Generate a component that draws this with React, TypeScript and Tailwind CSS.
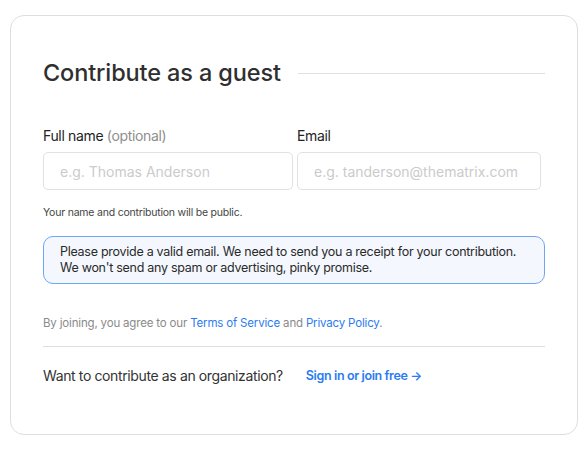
export default function App() {
  return (
    <div className="min-h-[454px] bg-white px-[10px] pt-[15px] font-['Inter',sans-serif]">
      <div className="h-[420px] w-[568px] rounded-[14px] border border-[#dedede] bg-white px-[32px] pt-[41px]">
        <div className="flex items-center gap-[17px]">
          <h2 className="whitespace-nowrap text-[23.5px] font-medium leading-8 tracking-[-0.005em] text-[#2f2f2f]">
            Contribute as a guest
          </h2>
          <div className="h-px flex-1 bg-[#e0e0e0]" />
        </div>

        <div className="mt-[37px] flex gap-[4px]">
          <label className="flex w-[250px] flex-col">
            <span className="text-[14px] leading-5 tracking-[-0.025em] text-[#222]">
              Full name <span className="text-[#8e8e8e]">(optional)</span>
            </span>
            <input
              className="mt-[6px] h-[38px] rounded-[5px] border border-[#e2e2e2] px-4 text-[14px] text-[#222] outline-none placeholder:text-[#cbcbcb]"
              placeholder="e.g. Thomas Anderson"
            />
          </label>
          <label className="flex w-[244px] flex-col">
            <span className="text-[14px] leading-5 tracking-[-0.025em] text-[#222]">Email</span>
            <input
              className="mt-[6px] h-[38px] rounded-[5px] border border-[#e2e2e2] px-4 text-[14px] text-[#222] outline-none placeholder:text-[#cbcbcb]"
              placeholder="e.g. tanderson@thematrix.com"
            />
          </label>
        </div>

        <p className="mt-[15px] text-[10.5px] leading-4 tracking-[-0.02em] text-[#444]">
          Your name and contribution will be public.
        </p>

        <div className="mt-[15px] rounded-[10px] border border-[#6ea6f2] bg-[#f4f8fe] py-[7px] pl-[16px] text-[12.5px] leading-4 tracking-[-0.022em] text-[#2a2a2a]">
          Please provide a valid email. We need to send you a receipt for your contribution.
          <br />
          We won't send any spam or advertising, pinky promise.
        </div>

        <p className="mt-[31px] text-[11.5px] leading-4 tracking-[-0.015em] text-[#8a8a8a]">
          By joining, you agree to our{" "}
          <a className="text-[#2b7cf0]">Terms of Service</a> and{" "}
          <a className="text-[#2b7cf0]">Privacy Policy</a>.
        </p>

        <div className="mt-[15px] h-px bg-[#e0e0e0]" />

        <div className="mt-[19px] flex items-center">
          <span className="text-[14px] leading-5 tracking-[-0.027em] text-[#333]">
            Want to contribute as an organization?
          </span>
          <a className="ml-[23px] text-[12.5px] font-semibold leading-5 tracking-[-0.03em] text-[#2b7cf0]">
            Sign in or join free →
          </a>
        </div>
      </div>
    </div>
  );
}
